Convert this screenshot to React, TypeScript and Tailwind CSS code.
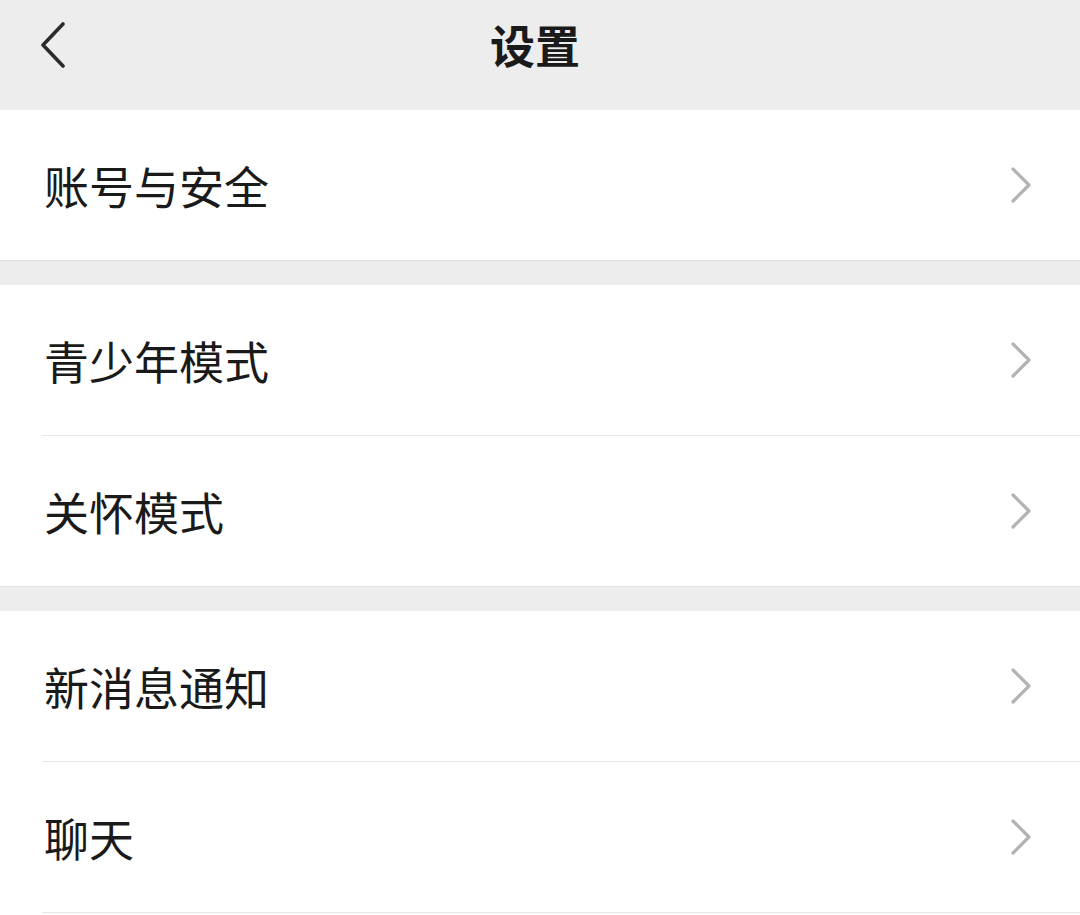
import * as React from "react";

type Item = { label: string };

const groups: Item[][] = [
  [{ label: "账号与安全" }],
  [{ label: "青少年模式" }, { label: "关怀模式" }],
  [{ label: "新消息通知" }, { label: "聊天" }, { label: "" }],
];

const ChevronRight = () => (
  <svg width="22" height="36" viewBox="0 0 22 36" fill="none">
    <path d="M3 2 L19 18 L3 34" stroke="#b3b3b3" strokeWidth="3.2" strokeLinecap="round" strokeLinejoin="round" />
  </svg>
);

const Row = ({ item }: { item: Item }) => (
  <div className="bg-white h-[150px] flex items-center pl-[44px] pr-[48px] shrink-0">
    <span className="flex-1 text-[45px] text-[#1a1a1a] leading-none">{item.label}</span>
    {item.label && <ChevronRight />}
  </div>
);

export default function App() {
  return (
    <div
      className="w-[1080px] h-[915px] overflow-hidden bg-[#ededed] flex flex-col"
      style={{ fontFamily: '"Noto Sans CJK SC", "Noto Sans", sans-serif' }}
    >
      {/* 顶部导航 */}
      <div className="h-[110px] shrink-0 bg-[#ededed] flex items-center relative">
        <div className="absolute left-[40px] top-[22px]">
          <svg width="26" height="46" viewBox="0 0 26 46" fill="none">
            <path d="M23 2 L3 23 L23 44" stroke="#2b2b2b" strokeWidth="3.6" strokeLinecap="round" strokeLinejoin="round" />
          </svg>
        </div>
        <h1 className="flex-1 text-center text-[45px] font-semibold text-[#1a1a1a] leading-none pr-[10px] pb-[22px]">设置</h1>
      </div>

      {groups.map((group, gi) => (
        <div key={gi} className="flex flex-col shrink-0">
          {gi > 0 && <div className="h-[25px] bg-[#ededed] border-t border-[#e2e2e2]" />}
          {group.map((item, i) => (
            <div key={i} className="flex flex-col bg-white">
              <Row item={item} />
              {i < group.length - 1 && <div className="ml-[42px] h-px bg-[#e6e6e6]" />}
            </div>
          ))}
        </div>
      ))}
    </div>
  );
}
